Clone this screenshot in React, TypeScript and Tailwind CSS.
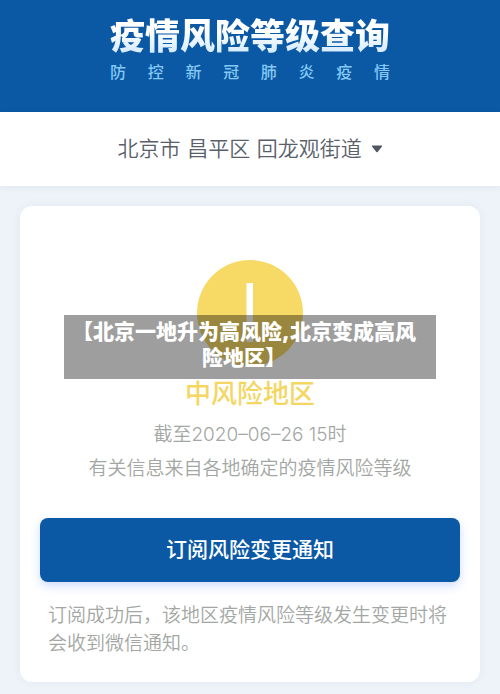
import React from "react";

const regions = ["北京市 昌平区 回龙观街道"];

function Header() {
  return (
    <header className="flex justify-center bg-[#0b59a5] pt-3 pb-7">
      <div>
        <h1 className="bg-gradient-to-b from-white from-40% to-[#c5e4ff] bg-clip-text text-[35px] leading-12 font-black text-transparent">
          疫情风险等级查询
        </h1>
        <p className="text-base leading-6 font-medium text-[#84c8f3] [text-align-last:justify]">防 控 新 冠 肺 炎 疫 情</p>
      </div>
    </header>
  );
}

function RegionPicker() {
  return (
    <div className="relative flex items-center justify-center gap-2 bg-white py-4 shadow-[0_2px_6px_rgba(60,80,120,0.06)]">
      <select
        name="region"
        aria-label="选择地区"
        className="h-[42px] appearance-none bg-transparent font-['DejaVu_Sans','Noto_Sans_CJK_SC',sans-serif] text-[21px] leading-[42px] font-[350] text-[#5a5f6b]"
      >
        {regions.map((r) => (
          <option key={r}>{r}</option>
        ))}
      </select>
      <svg width="12" height="8" viewBox="0 0 11 8" className="pointer-events-none fill-[#505663]" aria-hidden="true">
        <path d="M1 0.5h9a0.6 0.6 0 0 1 0.5 1L6.1 7a0.8 0.8 0 0 1-1.2 0L0.5 1.5a0.6 0.6 0 0 1 0.5-1z" />
      </svg>
    </div>
  );
}

function WarningIcon() {
  return (
    <svg width="107" height="107" viewBox="0 0 107 107" aria-hidden="true">
      <circle cx="53" cy="54" r="53" fill="#f7da66" />
      <rect x="49.5" y="24" width="6.5" height="44" fill="#fff" />
      <rect x="49.5" y="76" width="6.5" height="7" fill="#fff" />
    </svg>
  );
}

export default function App() {
  return (
    <div className="relative flex min-h-screen flex-col bg-[#edf3f8] font-['Inter','Noto_Sans_CJK_SC',sans-serif]">
      <Header />
      <RegionPicker />

      <main className="px-5 pt-5 pb-3">
        <section className="rounded-xl bg-white px-5 pt-[53px] pb-6 shadow-[0_0_10px_rgba(60,80,120,0.06)]">
          <div className="flex flex-col items-center text-center">
            <WarningIcon />
            <h2 className="mt-2 text-[26px] leading-10 font-medium text-[#f4d662]">中风险地区</h2>
            <p className="mt-1 text-[19px] leading-[34px] font-[350] text-[#a3a7a3]">截至2020–06–26 15时</p>
            <p className="text-[19px] leading-[34px] font-[350] text-[#a3a7a3]">有关信息来自各地确定的疫情风险等级</p>
          </div>

          <button
            type="button"
            className="mt-8 h-16 w-full rounded-lg bg-[#0b59a5] text-[21px] font-medium text-white shadow-[0_4px_10px_rgba(60,120,255,0.25)]"
          >
            订阅风险变更通知
          </button>

          <p className="mt-5 px-2 text-[19px] leading-7 font-[350] text-[#a3a7a3]">
            订阅成功后，该地区疫情风险等级发生变更时将会收到微信通知。
          </p>
        </section>
      </main>

      {/* caption banner */}
      <div className="absolute inset-x-16 top-1/2 -translate-y-1/2 bg-black/38 pt-1 pr-3 pb-2 text-center text-[21px] leading-[26px] font-black text-white">
        【北京一地升为高风险,北京变成高风险地区】
      </div>
    </div>
  );
}
